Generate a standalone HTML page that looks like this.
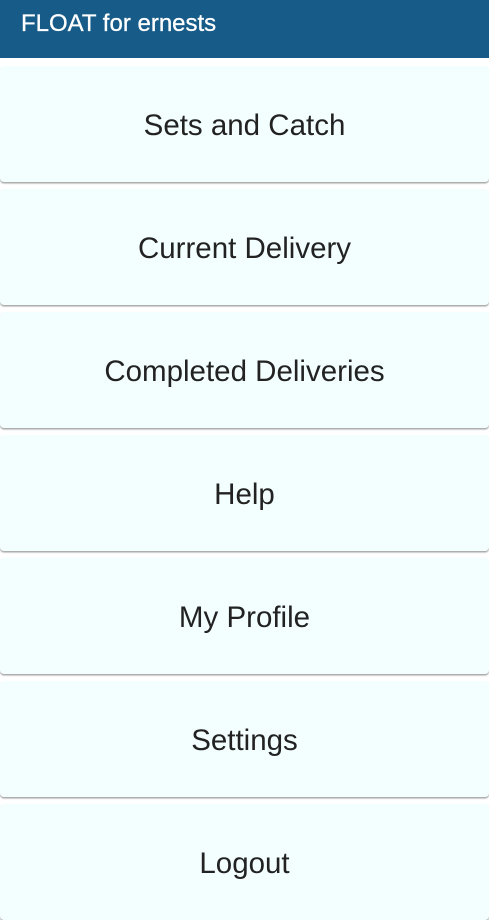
<!DOCTYPE html>
<html><head><style>
body{margin:0;width:489px;height:900px;overflow:hidden;background:#fff;font-family:"Liberation Sans",Roboto,sans-serif;}
.h{height:58px;background:#175b88;color:#fff;font-size:24px;line-height:48px;padding-left:21px;-webkit-text-stroke:0.3px #fff;}
.c{position:absolute;left:0;width:489px;height:116px;background:#f3feff;border-radius:4px;box-shadow:0 1.5px 1.5px rgba(0,0,0,.35);display:flex;align-items:center;justify-content:center;font-size:29.5px;color:#222;padding-top:3px;box-sizing:border-box;}
</style></head><body>
<div class="h">FLOAT for ernests</div>
<div class="c" style="top:66px">Sets and Catch</div>
<div class="c" style="top:189px">Current Delivery</div>
<div class="c" style="top:312px">Completed Deliveries</div>
<div class="c" style="top:435px">Help</div>
<div class="c" style="top:558px">My Profile</div>
<div class="c" style="top:681px">Settings</div>
<div class="c" style="top:804px">Logout</div>
</body></html>
